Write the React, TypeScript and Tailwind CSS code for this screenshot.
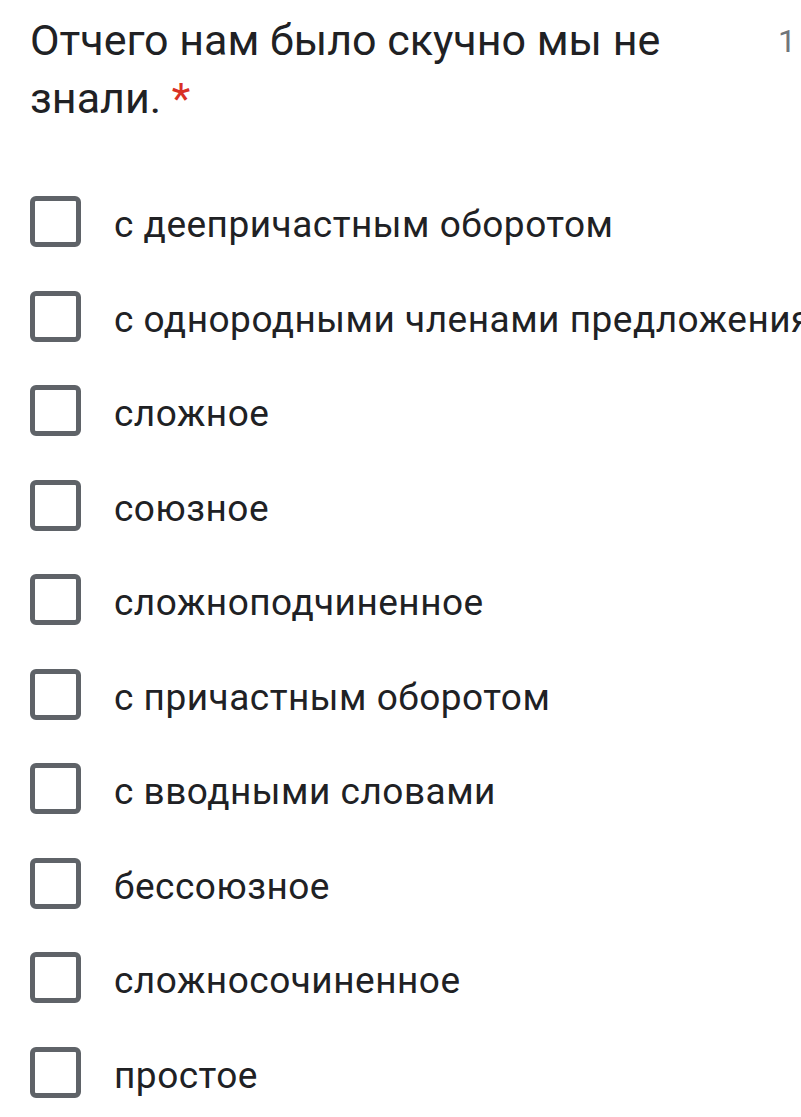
const options = [
  "с деепричастным оборотом",
  "с однородными членами предложения",
  "сложное",
  "союзное",
  "сложноподчиненное",
  "с причастным оборотом",
  "с вводными словами",
  "бессоюзное",
  "сложносочиненное",
  "простое",
];

export default function App() {
  return (
    <div
      className="w-[801px] h-[1117px] overflow-hidden bg-white text-[#202124]"
      style={{ fontFamily: "Roboto, 'Noto Sans', sans-serif" }}
    >
      {/* Question header */}
      <div className="flex pl-[30px] pt-[11px]">
        <h1 className="w-[690px] shrink-0 text-[43px] leading-[58px] font-normal">
          Отчего нам было скучно мы не знали.{" "}
          <span className="text-[#d93025]">*</span>
        </h1>
        <span className="ml-[58px] mt-[10px] shrink-0 whitespace-nowrap text-[32px] leading-[40px] text-[#70757a]">
          1 балл
        </span>
      </div>

      {/* Options */}
      <div className="mt-[69px] flex flex-col gap-[43.5px] pl-[30px]">
        {options.map((label) => (
          <label key={label} className="flex h-[51px] items-start gap-[33px] whitespace-nowrap">
            <span className="h-[51px] w-[51px] shrink-0 rounded-[6px] border-[5px] border-[#5f6368]" />
            <span className="mt-[7px] text-[37px] leading-[44px] tracking-[0.5px]">{label}</span>
          </label>
        ))}
      </div>
    </div>
  );
}
